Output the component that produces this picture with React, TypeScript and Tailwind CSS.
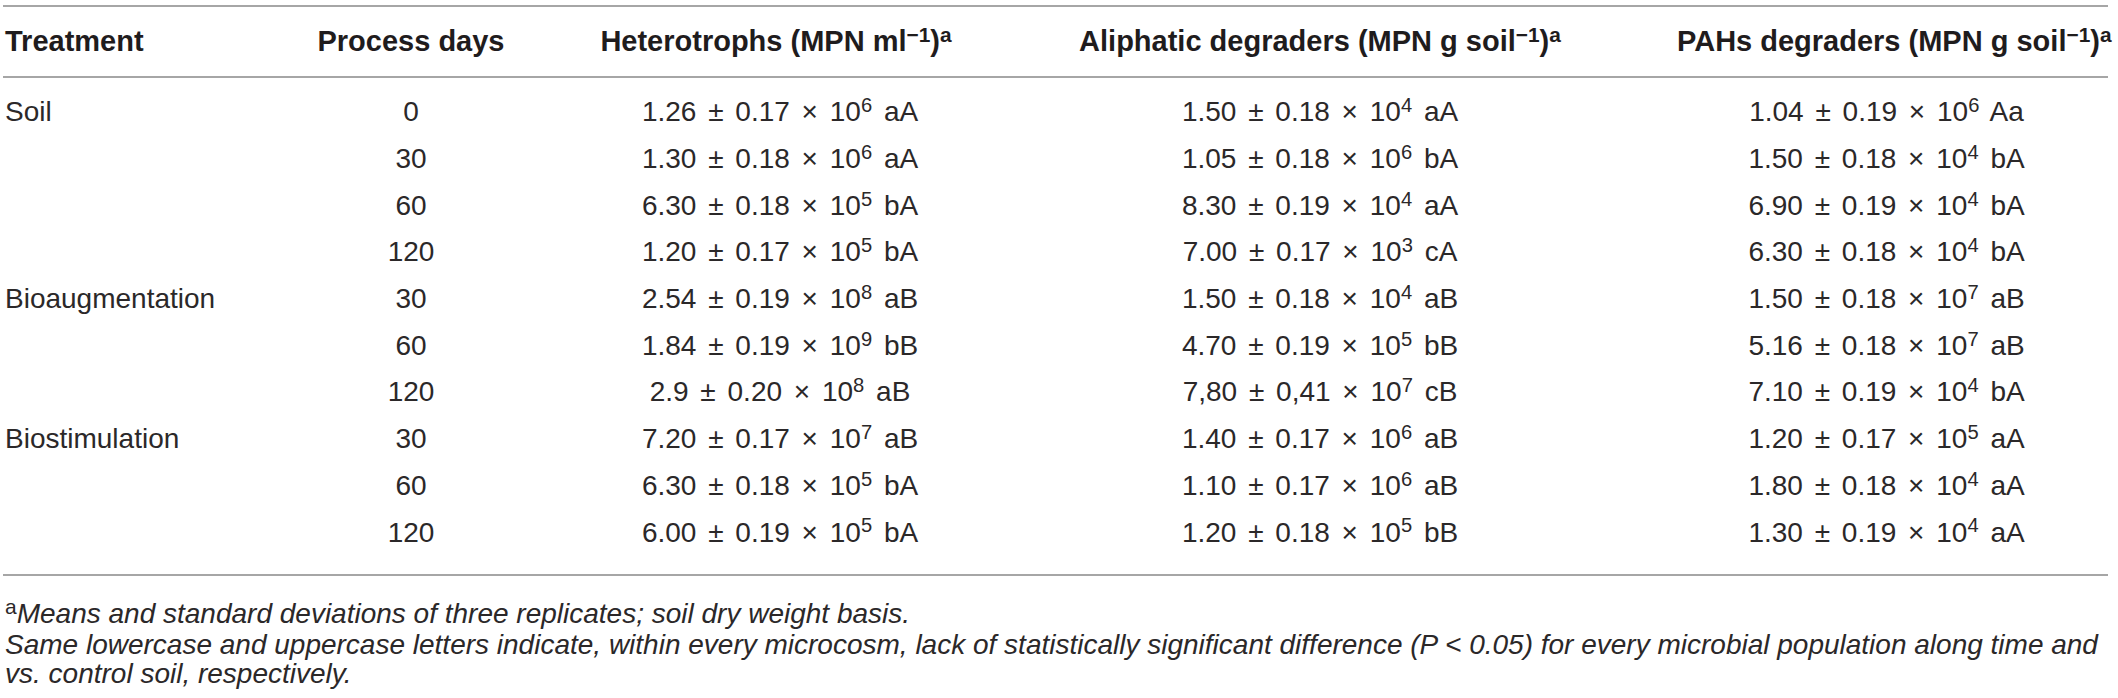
import React from 'react';

type Cell = [string, string, string, string]; // mean, sd, exponent, letters

interface Row {
  treatment: string;
  days: string;
  het: Cell;
  ali: Cell;
  pah: Cell;
}

const rows: Row[] = [
  { treatment: 'Soil', days: '0', het: ['1.26', '0.17', '6', 'aA'], ali: ['1.50', '0.18', '4', 'aA'], pah: ['1.04', '0.19', '6', 'Aa'] },
  { treatment: '', days: '30', het: ['1.30', '0.18', '6', 'aA'], ali: ['1.05', '0.18', '6', 'bA'], pah: ['1.50', '0.18', '4', 'bA'] },
  { treatment: '', days: '60', het: ['6.30', '0.18', '5', 'bA'], ali: ['8.30', '0.19', '4', 'aA'], pah: ['6.90', '0.19', '4', 'bA'] },
  { treatment: '', days: '120', het: ['1.20', '0.17', '5', 'bA'], ali: ['7.00', '0.17', '3', 'cA'], pah: ['6.30', '0.18', '4', 'bA'] },
  { treatment: 'Bioaugmentation', days: '30', het: ['2.54', '0.19', '8', 'aB'], ali: ['1.50', '0.18', '4', 'aB'], pah: ['1.50', '0.18', '7', 'aB'] },
  { treatment: '', days: '60', het: ['1.84', '0.19', '9', 'bB'], ali: ['4.70', '0.19', '5', 'bB'], pah: ['5.16', '0.18', '7', 'aB'] },
  { treatment: '', days: '120', het: ['2.9', '0.20', '8', 'aB'], ali: ['7,80', '0,41', '7', 'cB'], pah: ['7.10', '0.19', '4', 'bA'] },
  { treatment: 'Biostimulation', days: '30', het: ['7.20', '0.17', '7', 'aB'], ali: ['1.40', '0.17', '6', 'aB'], pah: ['1.20', '0.17', '5', 'aA'] },
  { treatment: '', days: '60', het: ['6.30', '0.18', '5', 'bA'], ali: ['1.10', '0.17', '6', 'aB'], pah: ['1.80', '0.18', '4', 'aA'] },
  { treatment: '', days: '120', het: ['6.00', '0.19', '5', 'bA'], ali: ['1.20', '0.18', '5', 'bB'], pah: ['1.30', '0.19', '4', 'aA'] },
];

const Sup: React.FC<{ children: React.ReactNode }> = ({ children }) => (
  <span className="relative -top-[0.45em] text-[0.72em] leading-none">{children}</span>
);

const Value: React.FC<{ cell: Cell }> = ({ cell }) => {
  const [mean, sd, exp, letters] = cell;
  return (
    <span className="whitespace-nowrap [word-spacing:4px]">
      {mean} ± {sd} × 10<Sup>{exp}</Sup> {letters}
    </span>
  );
};

const gridCols = 'grid grid-cols-[290px_236px_502px_578px_499px] items-center';

export default function App() {
  return (
    <div className="w-[2118px] h-[698px] bg-white text-[#2b2829] font-['Liberation_Sans',Arial,sans-serif] overflow-hidden">
      <div className="ml-[3px] w-[2105px] pt-[5px]">
        {/* Header */}
        <div className={`${gridCols} h-[73px] border-y-2 border-[#a6a6a6] font-bold text-[29px] leading-none text-[#1f1c1d]`}>
          <div className="pl-[2px]">Treatment</div>
          <div className="text-center whitespace-nowrap">Process days</div>
          <div className="pr-[8px] text-center whitespace-nowrap">
            Heterotrophs (MPN ml<Sup>−1</Sup>)<Sup>a</Sup>
          </div>
          <div className="text-center whitespace-nowrap">
            Aliphatic degraders (MPN g soil<Sup>−1</Sup>)<Sup>a</Sup>
          </div>
          <div className="pl-[68px] text-center whitespace-nowrap">
            PAHs degraders (MPN g soil<Sup>−1</Sup>)<Sup>a</Sup>
          </div>
        </div>

        {/* Body */}
        <div className="pt-[11px] pb-[18px] border-b-2 border-[#a6a6a6] text-[28px] leading-none">
          {rows.map((r, i) => (
            <div key={i} className={`${gridCols} h-[46.7px]`}>
              <div className="pl-[2px]">{r.treatment}</div>
              <div className="text-center">{r.days}</div>
              <div className="text-center">
                <Value cell={r.het} />
              </div>
              <div className="text-center">
                <Value cell={r.ali} />
              </div>
              <div className="pl-[56px] text-center">
                <Value cell={r.pah} />
              </div>
            </div>
          ))}
        </div>

        {/* Footnotes */}
        <div className="pt-[23px] pl-[2px] text-[28px] leading-[29px] italic whitespace-nowrap">
          <p>
            <span className="not-italic relative -top-[0.4em] text-[0.75em]">a</span>
            Means and standard deviations of three replicates; soil dry weight basis.
          </p>
          <p>
            Same lowercase and uppercase letters indicate, within every microcosm, lack of statistically significant
            difference (P &lt; 0.05) for every microbial population along time and
          </p>
          <p>vs. control soil, respectively.</p>
        </div>
      </div>
    </div>
  );
}
